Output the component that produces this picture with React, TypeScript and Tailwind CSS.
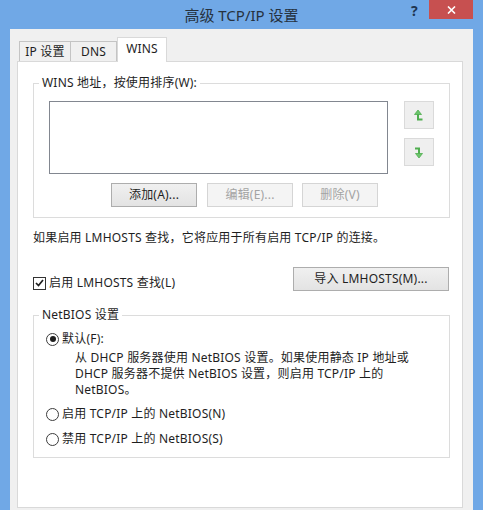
import React from 'react';

interface BtnProps {
  label: string;
  w: string;
  disabled?: boolean;
  className?: string;
}

const PushButton: React.FC<BtnProps> = ({ label, w, disabled, className = '' }) => (
  <div
    className={`${w} h-[24px] flex items-center justify-center border ${
      disabled
        ? 'border-[#d5d5d5] bg-[#f4f4f4] text-[#a3a3a3]'
        : 'border-[#adadad] bg-gradient-to-b from-[#f0f0f0] to-[#e3e3e3] text-[#1e1e1e]'
    } ${className}`}
  >
    {label}
  </div>
);

const ArrowUp = () => (
  <svg width="10" height="13" viewBox="0 0 10 13">
    <path d="M4 5 V10.5 H8.5" fill="none" stroke="#4fae4f" strokeWidth="2" />
    <path d="M0.5 5.5 L4 1 L7.5 5.5 Z" fill="#6cc46c" stroke="#4fae4f" strokeWidth="0.8" />
  </svg>
);

const ArrowDown = () => (
  <svg width="10" height="13" viewBox="0 0 10 13">
    <path d="M1 2.5 H5 V8" fill="none" stroke="#4fae4f" strokeWidth="2" />
    <path d="M1.5 7.5 L5 12 L8.5 7.5 Z" fill="#6cc46c" stroke="#4fae4f" strokeWidth="0.8" />
  </svg>
);

const Radio: React.FC<{ checked?: boolean }> = ({ checked }) => (
  <span className="w-[13px] h-[13px] rounded-full border border-[#3c3c3c] bg-white flex items-center justify-center">
    {checked && <span className="w-[6px] h-[6px] rounded-full bg-[#1e1e1e]" />}
  </span>
);

export default function App() {
  return (
    <div className="w-[483px] h-[510px] overflow-hidden bg-[#70a8e6] font-['Noto_Sans','Noto_Sans_CJK_SC',sans-serif] text-[12px] leading-[16px] tracking-[0.2px] text-[#1e1e1e]">
      {/* title bar */}
      <div className="h-[29px] grid grid-cols-[1fr_auto_1fr]">
        <div />
        <div className="self-center text-[15px] leading-[20px] tracking-normal text-[#26323f] pt-[1px]">高级 TCP/IP 设置</div>
        <div className="flex justify-end items-start">
          <span className="mt-[3px] mr-[11px] text-[14px] leading-[16px] font-bold text-[#1f3550]">?</span>
          <div className="mr-[10px] w-[44px] h-[19px] bg-[#c75050] flex items-center justify-center">
            <svg width="9" height="8" viewBox="0 0 9 8">
              <path d="M1 0.5 L8 7.5 M8 0.5 L1 7.5" stroke="#ffffff" strokeWidth="1.6" />
            </svg>
          </div>
        </div>
      </div>

      {/* client area */}
      <div className="mx-[10px] h-[481px] bg-[#f0f0f0] pt-[8px]">
        {/* tabs */}
        <div className="relative z-10 h-[24px] flex items-end pl-[9px]">
          <div className="w-[52px] h-[20px] border border-b-0 border-[#c4c4c4] bg-[#f0f0f0] flex items-center justify-center">
            IP 设置
          </div>
          <div className="-ml-px w-[47px] h-[20px] border border-b-0 border-[#c4c4c4] bg-[#f0f0f0] flex items-center justify-center">
            DNS
          </div>
          <div className="w-[50px] h-[25px] -mb-px border border-b-0 border-[#d9d9d9] bg-white flex items-center justify-center pb-[3px]">
            WINS
          </div>
        </div>

        {/* tab panel */}
        <div className="ml-[7px] mr-[10px] h-[447px] border border-[#d9d9d9] bg-white">
          <fieldset className="mt-[13px] ml-[15px] w-[417px] min-w-0 border border-[#dcdcdc]">
            <legend className="ml-[5px] px-[3px] leading-[16px]">WINS 地址，按使用排序(W):</legend>
            <div className="flex mt-[10px] ml-[15px]">
              <div className="w-[339px] h-[73px] border border-[#828790] bg-white" />
              <div className="ml-[16px] flex flex-col gap-[9px]">
                <div className="w-[30px] h-[28px] border border-[#dadada] bg-[#efefef] flex items-center justify-center">
                  <ArrowUp />
                </div>
                <div className="w-[30px] h-[28px] border border-[#dadada] bg-[#efefef] flex items-center justify-center">
                  <ArrowDown />
                </div>
              </div>
            </div>
            <div className="flex mt-[9px] mb-[10px] ml-[77px]">
              <PushButton label="添加(A)..." w="w-[86px]" />
              <PushButton label="编辑(E)..." w="w-[86px]" disabled className="ml-[10px]" />
              <PushButton label="删除(V)" w="w-[76px]" disabled className="ml-[9px]" />
            </div>
          </fieldset>

          <p className="mt-[12px] ml-[15px]">如果启用 LMHOSTS 查找，它将应用于所有启用 TCP/IP 的连接。</p>

          <div className="mt-[21px] ml-[15px] w-[416px] flex justify-between items-start">
            <div className="mt-[8px] h-[16px] flex items-center">
              <span className="w-[13px] h-[13px] border border-[#333333] bg-white flex items-center justify-center">
                <svg width="9" height="8" viewBox="0 0 9 8">
                  <path d="M1 4 L3.5 6.5 L8 1" fill="none" stroke="#1e1e1e" strokeWidth="1.7" />
                </svg>
              </span>
              <span className="ml-[3px]">启用 LMHOSTS 查找(L)</span>
            </div>
            <PushButton label="导入 LMHOSTS(M)..." w="w-[156px]" />
          </div>

          <fieldset className="mt-[16px] ml-[15px] w-[417px] min-w-0 border border-[#dcdcdc]">
            <legend className="ml-[5px] px-[3px] leading-[16px]">NetBIOS 设置</legend>
            <div className="mt-[8px] ml-[12px] h-[16px] flex items-center">
              <Radio checked />
              <span className="ml-[3px]">默认(F):</span>
            </div>
            <p className="mt-[3px] ml-[41px] whitespace-nowrap">
              从 DHCP 服务器使用 NetBIOS 设置。如果使用静态 IP 地址或
              <br />
              DHCP 服务器不提供 NetBIOS 设置，则启用 TCP/IP 上的
              <br />
              NetBIOS。
            </p>
            <div className="mt-[8px] ml-[12px] h-[16px] flex items-center">
              <Radio />
              <span className="ml-[3px]">启用 TCP/IP 上的 NetBIOS(N)</span>
            </div>
            <div className="mt-[9px] mb-[10px] ml-[12px] h-[16px] flex items-center">
              <Radio />
              <span className="ml-[3px]">禁用 TCP/IP 上的 NetBIOS(S)</span>
            </div>
          </fieldset>
        </div>
      </div>
    </div>
  );
}
